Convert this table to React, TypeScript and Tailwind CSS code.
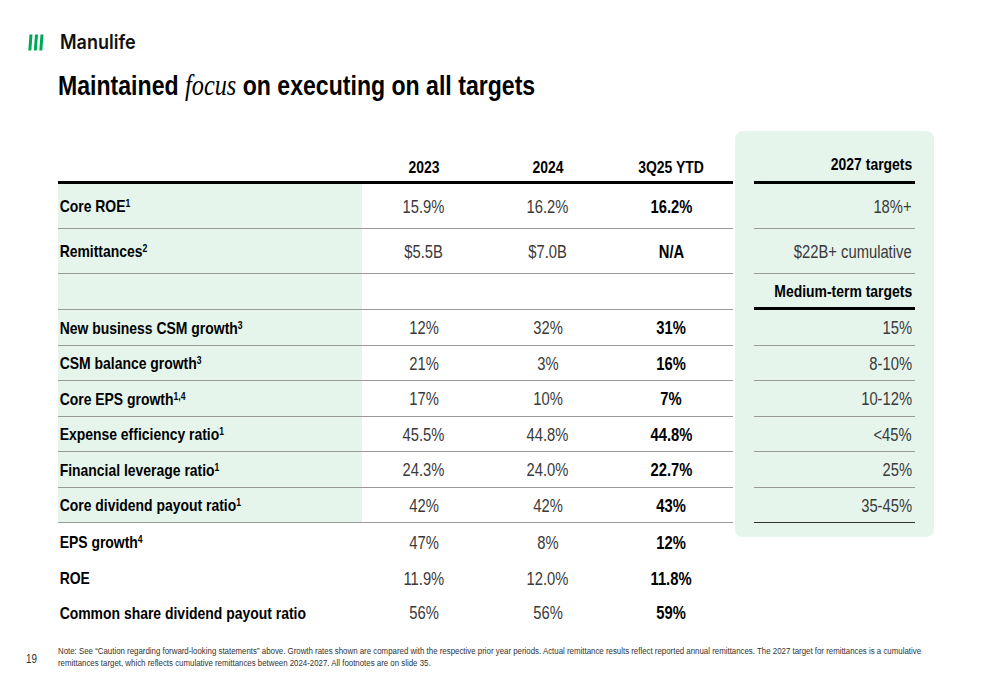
import React from "react";

const sans = {
  fontFamily: "'Liberation Sans', Arial, sans-serif",
};

// Arial Narrow is not installed, so narrow text is Liberation Sans squeezed on x
const sqL = "inline-block origin-left scale-x-[0.82] whitespace-nowrap";
const sqC = "inline-block scale-x-[0.82] whitespace-nowrap";
const sqR = "inline-block origin-right scale-x-[0.82] whitespace-nowrap";

type Row = {
  label: string;
  sup?: string;
  y23: string;
  y24: string;
  ytd: string;
  h: string;
  border: boolean;
  green: boolean;
};

const rows: Row[] = [
  { label: "Core ROE", sup: "1", y23: "15.9%", y24: "16.2%", ytd: "16.2%", h: "h-[45px]", border: true, green: true },
  { label: "Remittances", sup: "2", y23: "$5.5B", y24: "$7.0B", ytd: "N/A", h: "h-[45px]", border: true, green: true },
  { label: "", y23: "", y24: "", ytd: "", h: "h-[36px]", border: true, green: true },
  { label: "New business CSM growth", sup: "3", y23: "12%", y24: "32%", ytd: "31%", h: "h-[36px]", border: true, green: true },
  { label: "CSM balance growth", sup: "3", y23: "21%", y24: "3%", ytd: "16%", h: "h-[35px]", border: true, green: true },
  { label: "Core EPS growth", sup: "1,4", y23: "17%", y24: "10%", ytd: "7%", h: "h-[36px]", border: true, green: true },
  { label: "Expense efficiency ratio", sup: "1", y23: "45.5%", y24: "44.8%", ytd: "44.8%", h: "h-[35px]", border: true, green: true },
  { label: "Financial leverage ratio", sup: "1", y23: "24.3%", y24: "24.0%", ytd: "22.7%", h: "h-[36px]", border: true, green: true },
  { label: "Core dividend payout ratio", sup: "1", y23: "42%", y24: "42%", ytd: "43%", h: "h-[35px]", border: true, green: true },
  { label: "EPS growth", sup: "4", y23: "47%", y24: "8%", ytd: "12%", h: "h-[38px]", border: false, green: false },
  { label: "ROE", y23: "11.9%", y24: "12.0%", ytd: "11.8%", h: "h-[34px]", border: false, green: false },
  { label: "Common share dividend payout ratio", y23: "56%", y24: "56%", ytd: "59%", h: "h-[35px]", border: false, green: false },
];

const targets = [
  { text: "18%+", h: "h-[45px]", line: "border-b border-[#9a9a9a]", bold: false },
  { text: "$22B+ cumulative", h: "h-[45px]", line: "border-b border-[#9a9a9a]", bold: false },
  { text: "Medium-term targets", h: "h-[36px]", line: "border-b-[3px] border-black", bold: true },
  { text: "15%", h: "h-[36px]", line: "border-b border-[#9a9a9a]", bold: false },
  { text: "8-10%", h: "h-[35px]", line: "border-b border-[#9a9a9a]", bold: false },
  { text: "10-12%", h: "h-[36px]", line: "border-b border-[#9a9a9a]", bold: false },
  { text: "<45%", h: "h-[35px]", line: "border-b border-[#9a9a9a]", bold: false },
  { text: "25%", h: "h-[36px]", line: "border-b border-[#9a9a9a]", bold: false },
  { text: "35-45%", h: "h-[35px]", line: "border-b border-[#333]", bold: false },
];

const Logo = () => (
  <svg width="16" height="17" viewBox="0 0 16 17">
    <polygon points="1.5,0.5 4.5,0.5 3.3,16.5 0.3,16.5" fill="#00a758" />
    <polygon points="7,0.5 10,0.5 8.8,16.5 5.8,16.5" fill="#00a758" />
    <polygon points="12.5,0.5 15.5,0.5 14.3,16.5 11.3,16.5" fill="#00a758" />
  </svg>
);

export default function App() {
  return (
    <div className="w-[1000px] h-[685px] bg-white text-black overflow-hidden" style={sans}>
      <div className="flex items-center gap-[16px] pl-[28px] pt-[27px]">
        <Logo />
        <span
          className="inline-block origin-left scale-x-[0.9] text-[20px] font-semibold text-[#111]"
          style={{ fontFamily: "Inter, 'Liberation Sans', sans-serif" }}
        >
          Manulife
        </span>
      </div>

      <h1 className="ml-[58px] mt-[11px] text-[28.5px] font-bold leading-[34px]">
        <span className="inline-block origin-left scale-x-[0.81] whitespace-nowrap">
          Maintained{" "}
          <span className="italic font-normal text-[30px]" style={{ fontFamily: "'Liberation Serif', serif" }}>
            focus
          </span>{" "}
          on executing on all targets
        </span>
      </h1>

      <div className="flex items-start ml-[58px] mt-[29px]">
        <div className="w-[675px]">
          <div className="flex h-[53px] items-end border-b-[3px] border-black pb-[5px] text-[17px] font-bold leading-none">
            <div className="w-[304px]" />
            <div className="w-[124px] text-center"><span className={sqC}>2023</span></div>
            <div className="w-[124px] text-center"><span className={sqC}>2024</span></div>
            <div className="w-[123px] text-center"><span className={sqC}>3Q25 YTD</span></div>
          </div>
          {rows.map((r, i) => (
            <div
              key={i}
              className={`flex items-stretch ${r.h} ${r.border ? "border-b border-[#9a9a9a]" : ""}`}
            >
              <div className={`w-[304px] flex items-center pt-[2px] text-[17px] font-bold ${r.green ? "bg-[#e5f5ec]" : ""}`}>
                <span className={`${sqL} pl-[2px]`}>
                  {r.label}
                  {r.sup && <sup className="text-[10.5px] font-bold">{r.sup}</sup>}
                </span>
              </div>
              <div className="w-[124px] flex items-center justify-center pt-[2px] text-[18px] text-[#3a3a3a]">
                <span className={sqC}>{r.y23}</span>
              </div>
              <div className="w-[124px] flex items-center justify-center pt-[2px] text-[18px] text-[#3a3a3a]">
                <span className={sqC}>{r.y24}</span>
              </div>
              <div className="w-[123px] flex items-center justify-center pt-[2px] text-[18px] font-bold">
                <span className={sqC}>{r.ytd}</span>
              </div>
            </div>
          ))}
        </div>

        <div className="ml-[2px] w-[199px] rounded-[8px] bg-[#e5f5ec] px-[19px] pb-[14px]">
          <div className="flex h-[53px] items-end justify-end border-b-[3px] border-black pb-[8px] pr-[3px] text-[17px] font-bold leading-none">
            <span className={sqR}>2027 targets</span>
          </div>
          {targets.map((t, i) => (
            <div
              key={i}
              className={`flex items-center justify-end pt-[2px] pr-[3px] ${t.h} ${t.line} ${t.bold ? "text-[17px] font-bold text-black" : "text-[18px] text-[#3a3a3a]"}`}
            >
              <span className={sqR}>{t.text}</span>
            </div>
          ))}
        </div>
      </div>

      <div className="flex items-start mt-[15px] pl-[26px]">
        <div className="w-[32px] shrink-0 pt-[5px] text-[12px] text-[#333]">
          <span className={sqL}>19</span>
        </div>
        <p className="text-[9.6px] leading-[12px] text-[#333]">
          <span className={sqL}>
            Note: See “Caution regarding forward-looking statements” above. Growth rates shown are compared with the respective prior year periods. Actual remittance results reflect reported annual remittances. The 2027 target for remittances is a cumulative
            <br />
            remittances target, which reflects cumulative remittances between 2024-2027. All footnotes are on slide 35.
          </span>
        </p>
      </div>
    </div>
  );
}
